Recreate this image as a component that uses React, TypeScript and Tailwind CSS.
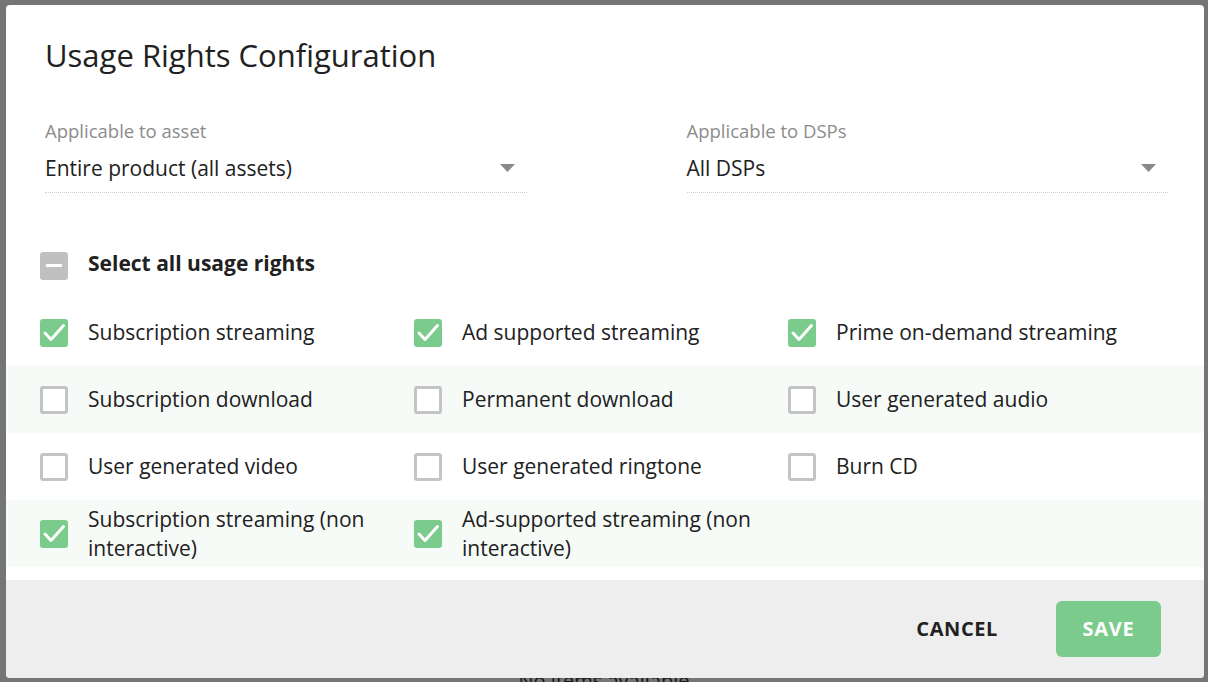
type Right = { label: string; checked: boolean }

const rows: Right[][] = [
  [
    { label: 'Subscription streaming', checked: true },
    { label: 'Ad supported streaming', checked: true },
    { label: 'Prime on-demand streaming', checked: true },
  ],
  [
    { label: 'Subscription download', checked: false },
    { label: 'Permanent download', checked: false },
    { label: 'User generated audio', checked: false },
  ],
  [
    { label: 'User generated video', checked: false },
    { label: 'User generated ringtone', checked: false },
    { label: 'Burn CD', checked: false },
  ],
  [
    { label: 'Subscription streaming (non interactive)', checked: true },
    { label: 'Ad-supported streaming (non interactive)', checked: true },
  ],
]

function Box({ state }: { state: 'on' | 'off' | 'mixed' }) {
  if (state === 'on') {
    return (
      <span className="flex h-[28px] w-[28px] shrink-0 items-center justify-center rounded-[3px] bg-[#7bcb8c]">
        <svg width="28" height="28" viewBox="0 0 28 28">
          <polyline points="5,14 11,20.5 23.5,6.5" fill="none" stroke="white" strokeWidth="3" strokeLinecap="round" strokeLinejoin="round" />
        </svg>
      </span>
    )
  }
  if (state === 'mixed') {
    return (
      <span className="flex h-[28px] w-[28px] shrink-0 items-center justify-center rounded-[3px] bg-[#c0c0c0]">
        <span className="h-[3px] w-[16px] bg-white" />
      </span>
    )
  }
  return <span className="h-[28px] w-[28px] shrink-0 rounded-[3px] border-[3px] border-[#c4c4c4] bg-white" />
}

function Select({ label, value }: { label: string; value: string }) {
  return (
    <div>
      <div className="text-[18.5px] leading-[24px] text-[#8c8c8c]">{label}</div>
      <div className="mt-[11px] flex items-center justify-between border-b border-dotted border-[#cfcfcf] pb-[10px] pr-[12px]">
        <span className="text-[21px] leading-[28px] text-[#212121]">{value}</span>
        <svg width="15" height="8" viewBox="0 0 15 8">
          <polygon points="0,0 15,0 7.5,8" fill="#8a8a8a" />
        </svg>
      </div>
    </div>
  )
}

export default function App() {
  return (
    <div className="relative h-[682px] w-[1208px] overflow-hidden bg-white font-['Open_Sans','Liberation_Sans',sans-serif]">
      {/* page behind the dialog */}
      <div className="flex h-full flex-col items-center justify-end">
        <div className="translate-y-[14px] text-[20px] text-[#333]">No items available</div>
      </div>
      <div className="absolute inset-0 bg-black/[0.54]" />

      <div className="absolute bottom-[4px] left-[6px] right-[4px] top-[5px] flex flex-col overflow-hidden rounded-[4px] bg-white">
        <div className="flex-1">
          <div className="pl-[39px] pr-[36px] pt-[32px]">
            <h1 className="text-[31px] leading-[36px] text-[#212121]">Usage Rights Configuration</h1>
            <div className="mt-[46px] grid grid-cols-2 gap-x-[160px]">
              <Select label="Applicable to asset" value="Entire product (all assets)" />
              <Select label="Applicable to DSPs" value="All DSPs" />
            </div>
          </div>

          <div className="mt-[39px] flex h-[67px] items-center gap-[20px] pl-[34px]">
            <Box state="mixed" />
            <span className="-translate-y-[2px] text-[21px] font-bold text-[#212121]">Select all usage rights</span>
          </div>

          {rows.map((row, i) => (
            <div
              key={i}
              className={`grid h-[67px] grid-cols-[374px_374px_374px] items-center pl-[34px] ${i % 2 === 1 ? 'bg-[#f6fbf8]' : 'bg-white'}`}
            >
              {row.map(r => (
                <div key={r.label} className="flex items-center gap-[20px]">
                  <Box state={r.checked ? 'on' : 'off'} />
                  <span className="max-w-[304px] text-[21px] leading-[29px] text-[#212121]">{r.label}</span>
                </div>
              ))}
            </div>
          ))}
        </div>

        <div className="flex h-[98px] shrink-0 items-center justify-end bg-[#eeeeee] pr-[43px]">
          <button className="mr-[42px] h-[56px] px-4 text-[20px] font-bold tracking-[0.6px] text-[#212121]">CANCEL</button>
          <button className="h-[56px] w-[105px] rounded-[6px] bg-[#7bcb8c] text-[20px] font-bold tracking-[0.8px] text-white">SAVE</button>
        </div>
      </div>
    </div>
  )
}
